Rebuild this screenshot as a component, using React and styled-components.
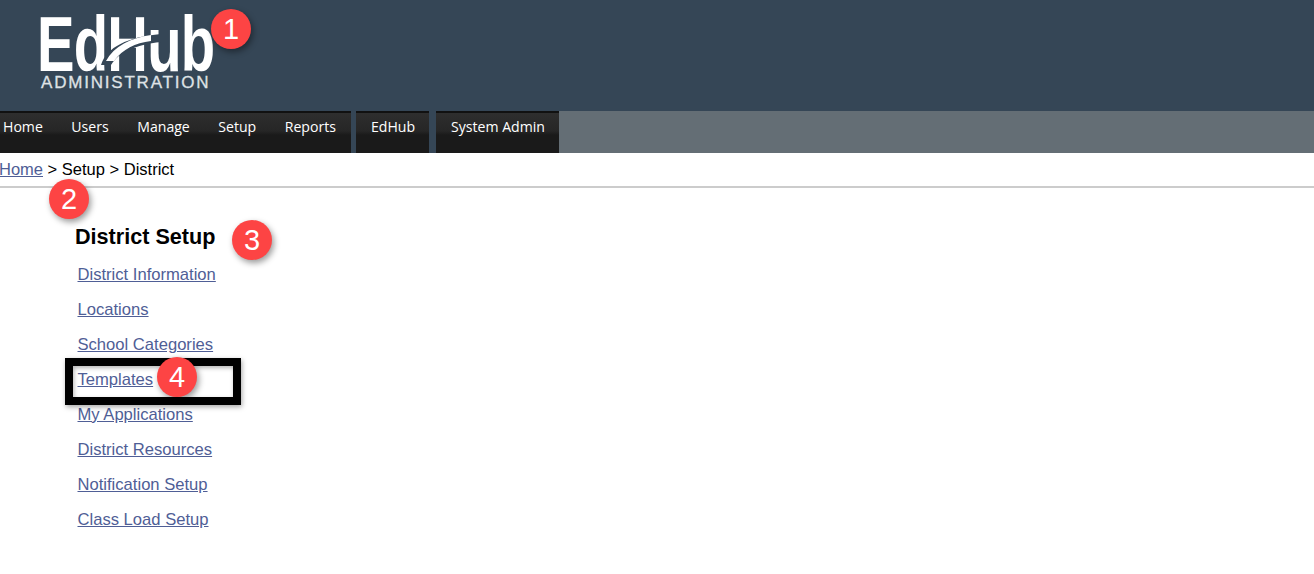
import styled, { createGlobalStyle } from "styled-components";

const GlobalStyle = createGlobalStyle`
  html, body {
    margin: 0;
    padding: 0;
    background: #fff;
    font-family: "Liberation Sans", Arial, sans-serif;
  }
`;

const Page = styled.div`
  position: relative;
  width: 1314px;
  height: 574px;
  overflow: hidden;
  background: #fff;
`;

const Header = styled.header`
  height: 111px;
  background: #354656;
  padding: 13px 0 0 41px;
  box-sizing: border-box;
`;

const Logo = styled.div`
  position: relative;
  width: 172px;
  height: 80px;
  color: #fff;
`;

const LogoName = styled.div`
  font-size: 77px;
  font-weight: bold;
  line-height: 62px;
  height: 62px;
  margin-left: -4px;
  letter-spacing: -1px;
  transform: scaleX(0.73);
  transform-origin: left top;
  white-space: nowrap;
`;

const LogoSub = styled.div`
  font-size: 17px;
  line-height: 15px;
  letter-spacing: 1.8px;
  color: #dfe2e5;
  white-space: nowrap;
  -webkit-text-stroke: 0.3px #dfe2e5;
`;

const Swoosh = styled.svg`
  position: absolute;
  left: 60px;
  top: 12px;
`;

const Nav = styled.nav`
  display: flex;
  height: 42px;
  background: #646e75;
`;

const TabRow = styled.div`
  display: flex;
  background: #354656;
`;

const TabGroup = styled.div`
  display: flex;
  gap: 28.5px;
  box-sizing: border-box;
  width: ${(p) => p.$width}px;
  margin-left: ${(p) => p.$gap || 0}px;
  padding-left: ${(p) => p.$inset}px;
  border-top: 2px solid #111;
  background: linear-gradient(#2e2e2e 0%, #262626 45%, #1a1a1a 55%, #1a1a1a 100%);
`;

const Tab = styled.a`
  color: #fff;
  font-family: "Open Sans", "Noto Sans", sans-serif;
  font-size: 14.1px;
  line-height: 28px;
  white-space: nowrap;
`;

const Breadcrumb = styled.div`
  height: 33px;
  border-bottom: 2px solid #ccc;
  font-size: 16.5px;
  line-height: 33px;
  color: #000;
  text-indent: -1px;
`;

const Link = styled.a`
  color: #4f5e96;
  text-decoration: underline;
`;

const Content = styled.main`
  padding: 36px 0 0 75px;
`;

const Title = styled.h1`
  margin: 0 0 15px;
  font-size: 21.6px;
  line-height: 25px;
  font-weight: bold;
  color: #000;
`;

const LinkList = styled.ul`
  list-style: none;
  margin: 0;
  padding: 0 0 0 2.5px;
  display: flex;
  flex-direction: column;
  gap: 14px;
`;

const LinkItem = styled.li`
  font-size: 16.6px;
  line-height: 21px;
`;

const Badge = styled.div`
  position: absolute;
  left: ${(p) => p.$x - 20}px;
  top: ${(p) => p.$y - 20}px;
  width: 40px;
  height: 40px;
  border-radius: 50%;
  background: #fd4444;
  color: #fff;
  font-size: 29px;
  line-height: 40px;
  text-align: center;
  box-shadow: 2px 3px 6px rgba(0, 0, 0, 0.4);
`;

const Highlight = styled.div`
  position: absolute;
  left: 65px;
  top: 358px;
  width: 176px;
  height: 47px;
  box-sizing: border-box;
  border: 8px solid #000;
  box-shadow: 1px 2px 5px rgba(0, 0, 0, 0.35), inset 1px 2px 4px rgba(0, 0, 0, 0.3);
`;

const tabs = ["Home", "Users", "Manage", "Setup", "Reports"];
const links = [
  "District Information",
  "Locations",
  "School Categories",
  "Templates",
  "My Applications",
  "District Resources",
  "Notification Setup",
  "Class Load Setup",
];

export default function App() {
  return (
    <Page>
      <GlobalStyle />
      <Header>
        <Logo>
          <LogoName>EdHub</LogoName>
          <Swoosh width="60" height="40" viewBox="0 0 60 40">
            <path d="M0 40 C6 22 26 12 60 9 L60 17 C34 20 18 27 10 40 Z" fill="#354656" />
            <path d="M5 36 C13 21 30 13 50 10 L50 16 C34 18 22 24 13 36 Z" fill="#fff" />
          </Swoosh>
          <LogoSub>ADMINISTRATION</LogoSub>
        </Logo>
      </Header>
      <Nav>
        <TabRow>
          <TabGroup $width={351} $inset={3}>
            {tabs.map((t) => (
              <Tab key={t}>{t}</Tab>
            ))}
          </TabGroup>
          <TabGroup $width={73} $inset={15} $gap={5}>
            <Tab>EdHub</Tab>
          </TabGroup>
          <TabGroup $width={123} $inset={15} $gap={7}>
            <Tab>System Admin</Tab>
          </TabGroup>
        </TabRow>
      </Nav>
      <Breadcrumb>
        <Link>Home</Link> &gt; Setup &gt; District
      </Breadcrumb>
      <Content>
        <Title>District Setup</Title>
        <LinkList>
          {links.map((l) => (
            <LinkItem key={l}>
              <Link>{l}</Link>
            </LinkItem>
          ))}
        </LinkList>
      </Content>
      <Highlight />
      <Badge $x={231} $y={29}>1</Badge>
      <Badge $x={69} $y={199}>2</Badge>
      <Badge $x={252} $y={240}>3</Badge>
      <Badge $x={177} $y={377}>4</Badge>
    </Page>
  );
}
